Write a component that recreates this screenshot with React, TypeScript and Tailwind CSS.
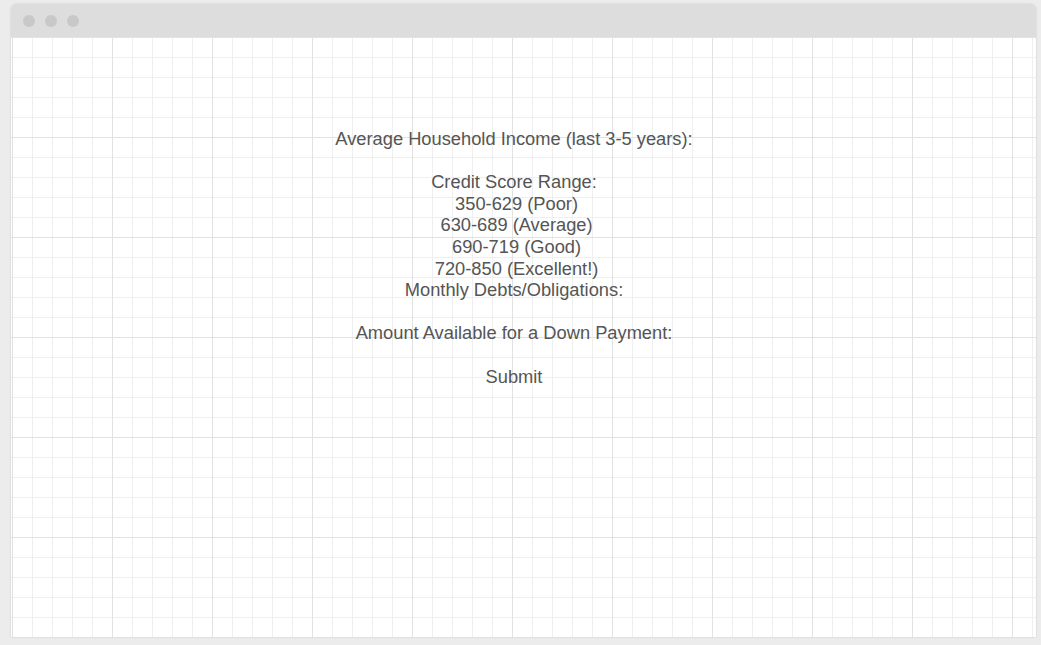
import React from "react";

export default function App() {
  const lines: string[] = [
    "Average Household Income (last 3-5 years):",
    "\u00a0",
    "Credit Score Range:",
    "\u00a0350-629 (Poor)",
    "\u00a0630-689 (Average)",
    "\u00a0690-719 (Good)",
    "\u00a0720-850 (Excellent!)",
    "Monthly Debts/Obligations:",
    "\u00a0",
    "Amount Available for a Down Payment:",
    "\u00a0",
    "Submit",
  ];
  return (
    <div className="w-[1041px] h-[645px] bg-[#ececec] pt-[4px] pl-[11px] pr-[5px] pb-[8px] overflow-hidden">
      <div className="h-full flex flex-col rounded-t-[6px] overflow-hidden shadow-[0_0_2px_rgba(0,0,0,0.18)]">
        <div className="h-[33px] shrink-0 bg-[#dddddd] flex items-center gap-[10px] pl-[12px]">
          <span className="w-[12px] h-[12px] rounded-full bg-[#c8c8c8]" />
          <span className="w-[12px] h-[12px] rounded-full bg-[#c8c8c8]" />
          <span className="w-[12px] h-[12px] rounded-full bg-[#c8c8c8]" />
        </div>
        <div className="relative flex-1 bg-white [background-image:linear-gradient(to_right,#e2e2e2_1px,transparent_1px),linear-gradient(to_bottom,#e2e2e2_1px,transparent_1px),linear-gradient(to_right,#efefef_1px,transparent_1px),linear-gradient(to_bottom,#efefef_1px,transparent_1px)] [background-size:100px_100px,100px_100px,20px_20px,20px_20px] [background-position:1px_0,0_0,1px_0,0_0] pt-[91px] pr-[19px]">
          <div
            className="flex flex-col items-center text-[18.3px] leading-[21.6px] text-[#555555] text-center"
            style={{ fontFamily: '"Liberation Sans", Arial, sans-serif' }}
          >
            {lines.map((l, i) => (
              <div key={i} className="whitespace-pre">
                {l}
              </div>
            ))}
          </div>
          <span className="absolute left-[446px] top-[150px] w-[2px] h-[2px] bg-[#3b5bff] rounded-full" />
        </div>
      </div>
    </div>
  );
}
